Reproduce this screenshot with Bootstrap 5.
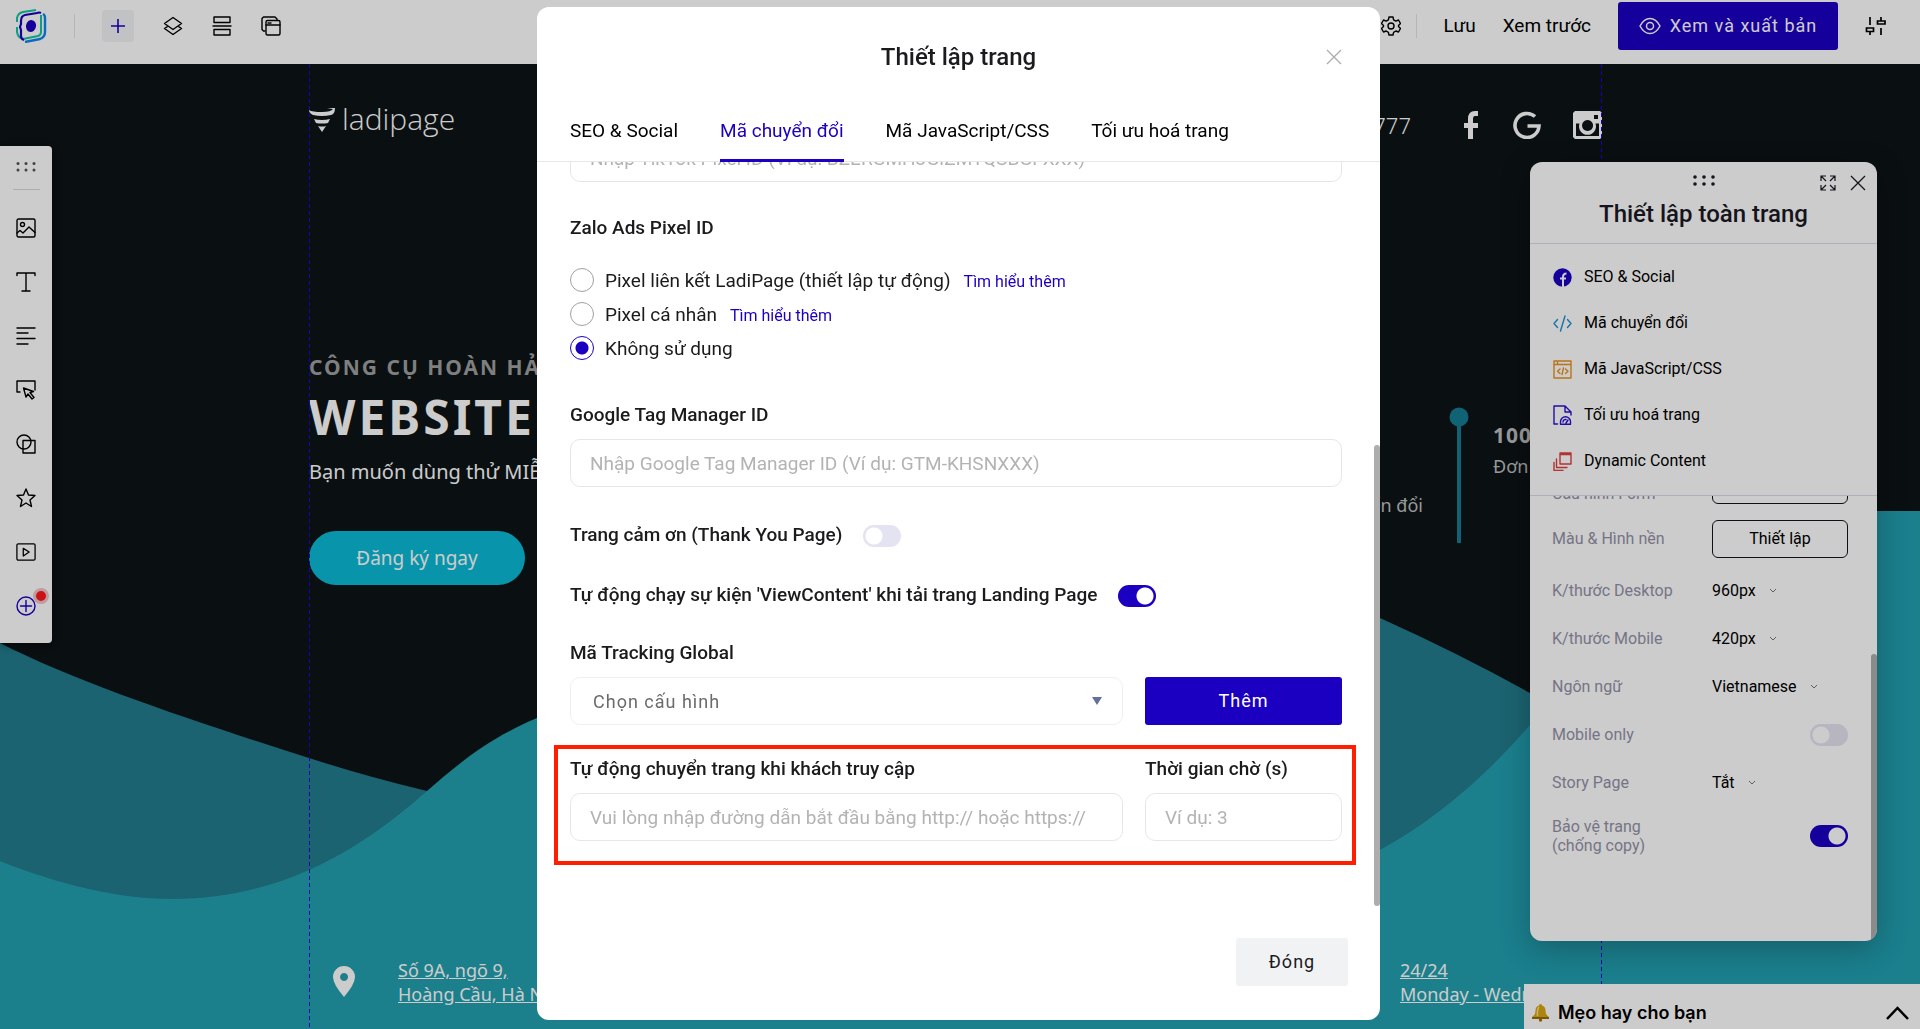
<!DOCTYPE html>
<html lang="vi">
<head>
<meta charset="utf-8">
<meta name="viewport" content="width=device-width, initial-scale=1">
<title>Thiết lập trang</title>
<link href="https://cdn.jsdelivr.net/npm/bootstrap@5.3.0/dist/css/bootstrap.min.css" rel="stylesheet">
<style>
  :root { --ink: #1b1b1d; --brand: #1c00c2; --line: #ededed; }
  body { font-family: Roboto, "Noto Sans", sans-serif; font-size: 19px; line-height: 24px; color: #000; height: 100vh; overflow: hidden; }
  svg { display: block; fill: none; flex: none; }
  .ico { stroke: currentColor; stroke-width: 1.4; stroke-linecap: round; stroke-linejoin: round; }
  .bare { border: 0; background: none; padding: 0; color: inherit; display: block; }
  .textlink { color: inherit; text-decoration: none; }

  /* editor top bar */
  .editor-bar { height: 64px; padding: 0 34px 12px 15px; }
  .bar-left, .bar-right { gap: 27px; }
  .bar-tools { gap: 29px; }
  .bar-gear { gap: 15px; }
  .rule-v { width: 1px; height: 24px; background: #e4e4e6; }
  .add-btn { width: 32px; height: 32px; border-radius: 4px; background: #f1f3f6; color: var(--brand); }
  .publish { width: 220px; height: 48px; border-radius: 3px; background: var(--brand); color: #fff; font-size: 18px; letter-spacing: 1px; gap: 9px; border: 0; }

  /* page being edited */
  .canvas { background: #0d1316; font-family: "Noto Sans", "Open Sans", sans-serif; color: #fff; }
  .waves { position: absolute; inset: 0; }
  .guides { position: relative; margin: 0 318px 0 309px; padding-bottom: 23px; }
  .guides::before, .guides::after { content: ""; position: absolute; top: 0; bottom: 0; width: 1px; background: repeating-linear-gradient(#2200e6 0 4px, transparent 4px 7px); }
  .guides::before { left: 0; }
  .guides::after { right: 0; }
  .site-top { height: 50px; margin-top: 36px; }
  .site-brand { padding-bottom: 12px; gap: 7px; }
  .site-name { font-family: "Open Sans", sans-serif; font-size: 30px; font-weight: 300; line-height: 36px; }
  .phone { font-size: 22px; font-weight: 300; }
  .socials { gap: 32px; margin-left: 50px; }
  .hero { padding-top: 201px; }
  .kicker { font-size: 21px; line-height: 32px; font-weight: 700; letter-spacing: 2px; color: #9f9f9f; }
  .headline { font-size: 48px; line-height: 60px; font-weight: 700; letter-spacing: 3px; margin: 4px 0 11px; }
  .pitch { font-size: 20px; line-height: 28px; margin-bottom: 45px; }
  .cta { width: 216px; height: 54px; border-radius: 27px; border: 0; background: #0abbd6; color: #fff; font-size: 19px; }
  .steps { padding-top: 257px; font-size: 18px; color: #bfbfbf; }
  .steps-bar { margin: 0 24px 0 26px; }
  .steps-l { padding-top: 86px; }
  .steps-r { width: 109px; padding-top: 13px; }
  .steps-num { font-size: 21px; font-weight: 700; line-height: 30px; letter-spacing: 1px; margin-bottom: 4px; }
  .pin { margin: 8px 43px 0 24px; }
  .addr { font-size: 18px; line-height: 24px; color: #fff; }
  .addr-r { width: 202px; }

  /* floating tool strip */
  .tools { position: absolute; left: 0; top: 146px; width: 52px; background: #fff; border-radius: 0 4px 4px 0; padding: 15px 0 27px; box-shadow: 0 2px 8px rgba(0,0,0,.4); }
  .tools hr { width: 27px; margin: 16px 0 28px; border-color: #d8d8d8; opacity: 1; }
  .tool-list { gap: 34px; }
  .dot-new { position: absolute; right: 3px; bottom: 39px; width: 16px; height: 16px; border-radius: 50%; border: 3px solid #f0c4c8; background: #fb1a1d; }

  /* floating settings panel */
  .side { position: absolute; top: 162px; right: 43px; bottom: 88px; width: 347px; background: #fff; border-radius: 12px; overflow: hidden; box-shadow: 0 8px 30px rgba(0,0,0,.25); font-size: 16px; line-height: 20px; }
  .side-head { height: 82px; padding-top: 13px; border-bottom: 1px solid #dedde9; }
  .side-title { font-size: 24px; line-height: 30px; font-weight: 500; color: #1a1826; margin: 13px 0 0; }
  .side-acts { position: absolute; right: 11px; top: 13px; gap: 14px; color: #1a1826; }
  .side-nav { padding: 10px 23px 11px; border-bottom: 1px solid #dedde9; }
  .side-nav a { height: 46px; gap: 12px; }
  .side-rows { padding: 0 29px 0 22px; overflow: hidden; }
  .side-rows label, .side-rows .cap { width: 160px; flex: none; color: #9392a8; }
  .first-row { margin-top: -30px; margin-bottom: 16px; }
  .bg-row { margin-bottom: 9px; }
  .set-row { height: 48px; }
  .copy-row { margin-top: 10px; line-height: 19px; }
  .outline { flex: 1; height: 38px; border: 1px solid #15131f; border-radius: 6px; background: none; color: #000; }
  .side-rows select { appearance: none; border: 0; background: none; padding: 0; color: #000; margin-right: 13px; }
  .thumb { position: absolute; right: 0; width: 6px; border-radius: 4px; }
  .side .thumb { top: 492px; bottom: 0; background: #aeaeae; }

  .sw.form-check-input { width: 38px; height: 22px; margin: 0; border: 0; background-color: #e4e3f1; background-image: radial-gradient(circle at 11px 11px, #fff 8px, transparent 9px); background-position: 0 0; background-size: 38px 22px; border-radius: 11px; flex: none; float: none; transition: none; }
  .sw.form-check-input:checked { background-color: var(--brand); background-image: radial-gradient(circle at 27px 11px, #fff 8px, transparent 9px); background-position: 0 0; }

  .tips { position: absolute; right: 0; bottom: 0; width: 396px; height: 45px; background: #fff; padding: 12px 11px 0 7px; font-family: Inter, sans-serif; font-size: 18px; font-weight: 600; }

  /* dialog */
  .dim { opacity: .2; }
  .modal.page-modal { padding-right: 3px; overflow: hidden; }
  .page-modal .modal-dialog { max-width: 843px; margin-top: 7px; margin-bottom: 0; height: calc(100vh - 16px); }
  .page-modal .modal-content { height: 100%; border: 0; border-radius: 12px; overflow: hidden; }
  .dlg-head { padding: 35px 33px 0; box-shadow: inset 0 -1px #e8e8e8; }
  .dlg-title { font-size: 24px; line-height: 30px; font-weight: 500; color: var(--ink); margin: 0 0 47px; text-align: center; }
  .dlg-close { position: absolute; right: 38px; top: 42px; color: #aaa; }
  .dlg-tabs { gap: 42px; }
  .dlg-tabs .nav-link { padding: 0 0 16px; border-bottom: 3px solid transparent; color: #000; }
  .dlg-tabs .nav-link.active { color: var(--brand); border-color: var(--brand); }
  .dlg-body { flex: 1; min-height: 0; overflow: hidden; padding: 0 38px 0 33px; color: var(--ink); }
  .thumb-dlg { top: 438px; bottom: 114px; background: #adadad; }
  .field.form-control { height: 48px; border: 1px solid #e6e6e6; border-radius: 10px; padding: 0 19px; font-size: 19px; color: var(--ink); }
  .field.form-control::placeholder { color: #b3b3b3; opacity: 1; }
  .field.form-select { height: 48px; border: 1px solid #f0f0f0; border-radius: 10px; padding: 0 22px; font-size: 18px; letter-spacing: 1px; color: #6b6b6b; background-image: url("data:image/svg+xml,%3Csvg xmlns='http://www.w3.org/2000/svg' viewBox='0 0 10 8'%3E%3Cpath d='M0 0h10L5 8z' fill='%2363709a'/%3E%3C/svg%3E"); background-size: 10px 8px; background-position: right 20px center; }
  .field.first-field { margin-top: -28px; }
  .lbl { font-weight: 500; display: block; margin-bottom: 12px; }
  .blk-a { margin-top: 34px; }
  .blk-b { margin-top: 38px; }
  .opts { margin-top: 23px; }
  .opt { height: 34px; gap: 11px; }
  .opt .form-check-input { width: 24px; height: 24px; margin: 0; border: 1px solid #a0a0a0; flex: none; }
  .opt .form-check-input:checked { background-color: #fff; border-color: var(--brand); background-image: radial-gradient(circle, var(--brand) 6px, transparent 7px); }
  .opt-text { padding-top: 2px; }
  .opt a { font-size: 16px; color: var(--brand); text-decoration: none; margin-left: 13px; }
  .sw-row { gap: 21px; margin-top: 36px; }
  .sw-row .lbl { margin: 0; }
  .pair { gap: 22px; }
  .pair-r { width: 197px; flex: none; }
  .solid { height: 48px; border: 0; border-radius: 3px; background: var(--brand); color: #fff; font-size: 18px; letter-spacing: 1px; }
  .marked { margin: 20px -14px 0 -16px; padding: 8px 10px 20px 12px; border: 4px solid #ff1f00; }
  .dlg-foot { padding: 32px 32px 34px; }
  .shut { width: 112px; height: 48px; border: 0; border-radius: 3px; background: #f1f2f4; color: var(--ink); font-size: 18px; letter-spacing: 1px; }
</style>
</head>
<body class="d-flex flex-column position-relative">

<header class="editor-bar d-flex align-items-center justify-content-between bg-white">
  <div class="bar-left d-flex align-items-center">
    <a href="#" aria-label="LadiPage"><svg width="32" height="34" viewBox="0 0 32 34">
      <path d="M2 13V9q1-5 6-6l13-2M2 18v5q1 5 4 6M8 30l15-3q3-1 3-4V6" stroke="#12c7a4" stroke-width="2"/>
      <path d="M28 5q2 1 2 4v14q0 5-5 7l-15 3" stroke="#0a86f0" stroke-width="2.4"/>
      <path d="M26 4q-2-1-4 0L10 6q-4 1-4 6v3l-1 3 1 3v6q0 3 3 4" stroke="#1c00c2" stroke-width="2.2"/>
      <ellipse cx="16" cy="17" rx="5" ry="6" fill="#1c00c2" transform="rotate(12 16 17)"/></svg></a>
    <span class="rule-v"></span>
    <div class="bar-tools d-flex align-items-center">
      <button class="bare add-btn d-flex align-items-center justify-content-center" aria-label="Thêm"><svg width="14" height="14" viewBox="0 0 14 14" stroke="currentColor" stroke-width="1.6"><path d="M7 0v14M0 7h14"/></svg></button>
      <button class="bare" aria-label="Lớp"><svg class="ico" width="20" height="20" viewBox="0 0 20 20"><path d="M10 1.500 1.500 7.500 10 13.500 18.500 7.500zM4 10.800 1.500 12.500l8.500 6 8.500-6L16 10.800"/></svg></button>
      <button class="bare" aria-label="Section"><svg class="ico" width="20" height="20" viewBox="0 0 20 20"><path d="M2 1h16v5.500H2zM1 10h18M2 13.500h16V19H2z"/></svg></button>
      <button class="bare" aria-label="Popup"><svg class="ico" width="20" height="20" viewBox="0 0 20 20"><path d="M4 15H2.500L1 13.500v-11L2.500 1H14l2 2v1.500"/><rect x="5" y="4.500" width="14" height="14.500" rx="1.500"/><path d="M5 9h14M7 7h1M9 7h1"/></svg></button>
    </div>
  </div>
  <div class="bar-right d-flex align-items-center">
    <div class="bar-gear d-flex align-items-center">
      <button class="bare" aria-label="Cài đặt"><svg class="ico" width="20" height="20" viewBox="0 0 20 20"><path d="M8 1h4l.6 2.800 2.200 1.300L17.500 4l2 3.500-2 2v1l2 2-2 3.500-2.700-1-2.200 1.300L12 19H8l-.6-2.700L5.200 15l-2.700 1-2-3.500 2-2v-1l-2-2L2.500 4l2.700 1.100 2.200-1.300z"/><circle cx="10" cy="10" r="3"/></svg></button>
      <span class="rule-v"></span>
    </div>
    <a href="#" class="textlink">Lưu</a>
    <a href="#" class="textlink">Xem trước</a>
    <button class="publish d-flex align-items-center justify-content-center"><svg width="22" height="18" viewBox="0 0 22 18" stroke="currentColor" stroke-width="1.500"><path d="M1 9q4-7.500 10-7.500T21 9q-4 7.500-10 7.500T1 9z"/><circle cx="11" cy="9" r="3.500"/></svg>Xem và xuất bản</button>
    <button class="bare" aria-label="Tuỳ chỉnh"><svg width="21" height="20" viewBox="0 0 21 20" stroke="currentColor" stroke-width="1.700"><path d="M5 1v8M1.500 12h7v3.500h-7zM5 15.500V19M16 1v3.500M12.500 5h7.500v3h-7.500zM16 12v7"/></svg></button>
  </div>
</header>

<main class="canvas position-relative flex-grow-1">
  <svg class="waves w-100 h-100" viewBox="0 64 1920 965" preserveAspectRatio="none">
    <path d="M0 643C80 684 200 723 309 758Q368 777 427 791C700 850 900 420 1380 618Q1460 654 1530 693Q1700 800 1760 1029H0z" fill="#227c8c"/>
    <path d="M0 861C60 885 120 899 171 899C290 899 370 841 427 791C460 762 490 738 537 718C800 620 950 1070 1380 850Q1460 806 1530 725C1640 600 1740 510 1877 511L1920 511V1029H0z" fill="#229fb0"/>
  </svg>

  <div class="guides h-100 d-flex flex-column">
    <div class="site-top d-flex align-items-center">
      <div class="site-brand d-flex align-items-center">
        <svg width="26" height="25" viewBox="0 0 26 25"><path fill="#fff" d="M0 3q3 2 13 2 9 0 11-3L18 1l8 0q0 6-4 7-9 2-18 0Q0 6 0 3zM5 12q8 2 16 0l-2 4q-6 1-12 0zM9 19q4 1 8 0l-4 6z"/></svg>
        <span class="site-name">ladipage</span>
      </div>
      <span class="phone ms-auto">777</span>
      <div class="socials d-flex align-items-center">
        <svg width="20" height="28" viewBox="0 0 20 28"><path fill="#fff" d="M7 28V17H3v-5h4V8q0-8 7-8h3v5h-3q-2 0-2 3v4h5v5h-5v11z"/></svg>
        <svg width="28" height="28" viewBox="0 0 28 28"><path d="M22 5.500A12 12 0 1 0 26 15H14.500" stroke="#fff" stroke-width="3.600"/></svg>
        <svg width="29" height="28" viewBox="0 0 29 28"><path fill="#fff" fill-rule="evenodd" d="M2 0h25l2 2v24l-2 2H2l-2-2V2zM21 4v4h4V4zM3 12.500V25h23V12.500h-3.500a8.500 8.500 0 1 1-16 0zM14.500 9a5.500 5.500 0 1 0 .1 0z"/></svg>
      </div>
    </div>

    <div class="d-flex justify-content-between">
      <div class="hero text-nowrap">
        <div class="kicker">CÔNG CỤ HOÀN HẢO</div>
        <h1 class="headline">WEBSITE</h1>
        <p class="pitch">Bạn muốn dùng thử MIỄN</p>
        <button class="cta">Đăng ký ngay</button>
      </div>
      <div class="steps d-flex text-nowrap">
        <div class="steps-l">chuyển đổi</div>
        <svg class="steps-bar" width="20" height="136" viewBox="0 0 20 136"><path d="M10 10v126" stroke="#157c91" stroke-width="4"/><circle cx="10" cy="10" r="9.500" fill="#157c91"/></svg>
        <div class="steps-r"><div class="steps-num">100</div>Đơn</div>
      </div>
    </div>

    <div class="d-flex mt-auto align-items-start text-nowrap">
      <svg class="pin" width="22" height="31" viewBox="0 0 22 31"><path fill="#fff" fill-rule="evenodd" d="M11 0a11 11 0 0 1 11 11q0 7-11 20Q0 18 0 11A11 11 0 0 1 11 0zm0 7a4 4 0 1 0 .1 0z"/></svg>
      <a href="#" class="addr">Số 9A, ngõ 9,<br>Hoàng Cầu, Hà Nội</a>
      <a href="#" class="addr addr-r ms-auto">24/24<br>Monday - Wednes</a>
    </div>
  </div>
</main>

<nav class="tools" aria-label="Công cụ">
  <div class="d-flex flex-column align-items-center">
    <svg width="20" height="12" viewBox="0 0 20 12"><g fill="#555"><circle cx="2" cy="2.500" r="1.500"/><circle cx="10" cy="2.500" r="1.500"/><circle cx="18" cy="2.500" r="1.500"/><circle cx="2" cy="9" r="1.500"/><circle cx="10" cy="9" r="1.500"/><circle cx="18" cy="9" r="1.500"/></g></svg>
    <hr>
    <div class="tool-list d-flex flex-column">
      <button class="bare" aria-label="Ảnh"><svg class="ico" width="20" height="20" viewBox="0 0 20 20"><rect x="1" y="1" width="18" height="18" rx="1.500"/><circle cx="6.500" cy="6.500" r="2"/><path d="M1 15l3-2.500L7 15l6-6 6 5.500"/></svg></button>
      <button class="bare" aria-label="Văn bản"><svg class="ico" width="20" height="20" viewBox="0 0 20 20"><path d="M1 3.500V1h18v2.500M10 1v18M6 19h8"/></svg></button>
      <button class="bare" aria-label="Đoạn văn"><svg class="ico" width="20" height="20" viewBox="0 0 20 20"><path d="M1 2h18M1 7h11M1 12.500h18M1 18h11"/></svg></button>
      <button class="bare" aria-label="Nút"><svg class="ico" width="20" height="20" viewBox="0 0 20 20"><path d="M4 12H1V1h18v9M7.500 8l2.500 9 2-3 4 5 2-1.500-4-5 3.500-1z"/></svg></button>
      <button class="bare" aria-label="Hình khối"><svg class="ico" width="20" height="20" viewBox="0 0 20 20"><circle cx="8" cy="8" r="7"/><path d="M7 6.500h12V19H7z"/></svg></button>
      <button class="bare" aria-label="Biểu tượng"><svg class="ico" width="20" height="20" viewBox="0 0 20 20"><path d="M10 1l2.500 6 6.500.5-5 4.500 1.500 6.500L10 15l-5.500 3.500L6 12 1 7.500 7.500 7z"/></svg></button>
      <button class="bare" aria-label="Video"><svg class="ico" width="20" height="20" viewBox="-1 0 22 20"><rect x="0" y="1" width="20" height="18" rx="1.500"/><path d="M7 6v8.500l6.500-4.500z"/></svg></button>
      <button class="bare" aria-label="Thêm"><svg class="ico" width="20" height="20" viewBox="0 0 20 20" color="#1c00c2"><circle cx="10" cy="10" r="9"/><path d="M10 4.500v11M4.500 10h11"/></svg></button>
    </div>
  </div>
  <span class="dot-new"></span>
</nav>

<aside class="side d-flex flex-column">
  <div class="side-head d-flex flex-column align-items-center flex-shrink-0">
    <svg width="22" height="11" viewBox="0 0 22 11"><g fill="#1a1826"><circle cx="2" cy="2" r="1.800"/><circle cx="11" cy="2" r="1.800"/><circle cx="20" cy="2" r="1.800"/><circle cx="2" cy="9" r="1.800"/><circle cx="11" cy="9" r="1.800"/><circle cx="20" cy="9" r="1.800"/></g></svg>
    <h2 class="side-title">Thiết lập toàn trang</h2>
    <div class="side-acts d-flex">
      <button class="bare" aria-label="Mở rộng"><svg width="16" height="16" viewBox="0 0 16 16" stroke="currentColor" stroke-width="1.200"><path d="M1 6V1h5M10 1h5v5M15 10v5h-5M6 15H1v-5M1 1l5 5M15 1l-5 5M15 15l-5-5M1 15l5-5"/></svg></button>
      <button class="bare" aria-label="Đóng bảng"><svg width="16" height="16" viewBox="0 0 16 16" stroke="currentColor" stroke-width="1.300"><path d="M1 1l14 14M15 1 1 15"/></svg></button>
    </div>
  </div>
  <nav class="side-nav flex-shrink-0">
    <a href="#" class="textlink d-flex align-items-center"><svg width="19" height="19" viewBox="0 0 19 19"><circle cx="9.500" cy="9.500" r="9.200" fill="#1c00c2"/><path d="M10 19V9q0-3.500 3.500-3.500M7 10.500h6" stroke="#fff" stroke-width="2"/></svg>SEO &amp; Social</a>
    <a href="#" class="textlink d-flex align-items-center"><svg class="ico" width="19" height="19" viewBox="0 0 19 19" color="#1a8fd8"><path d="M4.500 5.500 1 9.500l3.500 4M14.500 5.500l3.500 4-3.500 4M12 2 7.500 17"/></svg>Mã chuyển đổi</a>
    <a href="#" class="textlink d-flex align-items-center"><svg class="ico" width="19" height="19" viewBox="0 0 19 19" color="#e8921f"><path d="M1 1h17v17H1zM1 4.500h17M4.500 1v3M7 9l-2.500 2.200L7 13.500M12.500 9l2.500 2.200-2.500 2.300M10.500 8 9 14.500"/></svg>Mã JavaScript/CSS</a>
    <a href="#" class="textlink d-flex align-items-center"><svg class="ico" width="19" height="20" viewBox="0 0 19 20" color="#2a10d0"><path d="M4.500 19H1V1h11l6 6v3M12 1v6h6M7.500 19.200v-2.500a5 5 0 0 1 10 0v2.500zM10 17a2.500 2.500 0 0 1 3-2.500M13 18l2-3"/></svg>Tối ưu hoá trang</a>
    <a href="#" class="textlink d-flex align-items-center"><svg class="ico" width="19" height="19" viewBox="0 0 19 19" color="#e0403f"><path d="M7 1h11v11H7zM7 2.500h11M3.500 7v8.500H14M1 10.500V18.500h9"/></svg>Dynamic Content</a>
  </nav>
  <div class="side-rows flex-grow-1">
    <div class="first-row d-flex align-items-end"><span class="cap">Cấu hình Form</span><button class="outline">Thiết lập</button></div>
    <div class="bg-row d-flex align-items-center"><span class="cap">Màu &amp; Hình nền</span><button class="outline">Thiết lập</button></div>
    <div class="set-row d-flex align-items-center"><label for="dw">K/thước Desktop</label><select id="dw"><option>960px</option></select><svg width="8" height="6" viewBox="0 0 8 6" stroke="#777"><path d="M1 1l3 3 3-3"/></svg></div>
    <div class="set-row d-flex align-items-center"><label for="mw">K/thước Mobile</label><select id="mw"><option>420px</option></select><svg width="8" height="6" viewBox="0 0 8 6" stroke="#777"><path d="M1 1l3 3 3-3"/></svg></div>
    <div class="set-row d-flex align-items-center"><label for="lg">Ngôn ngữ</label><select id="lg"><option>Vietnamese</option></select><svg width="8" height="6" viewBox="0 0 8 6" stroke="#777"><path d="M1 1l3 3 3-3"/></svg></div>
    <div class="set-row d-flex align-items-center justify-content-between"><label for="mo">Mobile only</label><input id="mo" type="checkbox" class="form-check-input sw"></div>
    <div class="set-row d-flex align-items-center"><label for="sp">Story Page</label><select id="sp"><option>Tắt</option></select><svg width="8" height="6" viewBox="0 0 8 6" stroke="#777"><path d="M1 1l3 3 3-3"/></svg></div>
    <div class="copy-row d-flex align-items-center justify-content-between"><label for="pc">Bảo vệ trang<br>(chống copy)</label><input id="pc" type="checkbox" class="form-check-input sw" checked></div>
  </div>
  <span class="thumb"></span>
</aside>

<section class="tips d-flex align-items-center">
  <svg width="19" height="19" viewBox="0 0 19 19" class="me-2"><path d="M9.500 1q1.500 0 1.500 1.500 3.500 1 3.500 5 0 4.500 3.500 6.500v2H1v-2q3.500-2 3.500-6.500 0-4 3.500-5Q8 1 9.500 1z" fill="#d9a514"/><path d="M8 4q-2 2-1.500 9" stroke="#fbe07a" stroke-width="1.500"/><path d="M1 15h17" stroke="#8a5a0a" stroke-width="1.500"/><circle cx="9.500" cy="17" r="1.700" fill="#a4700c"/></svg>
  <span>Mẹo hay cho bạn</span>
  <button class="bare ms-auto" aria-label="Mở"><svg width="23" height="14" viewBox="0 0 23 14" stroke="#000" stroke-width="2.500"><path d="M1 13 11.500 2 22 13"/></svg></button>
</section>

<div class="modal-backdrop dim"></div>

<div class="modal page-modal d-block" tabindex="-1" role="dialog" aria-labelledby="dlgTitle">
  <div class="modal-dialog">
    <div class="modal-content">
      <div class="dlg-head">
        <h2 class="dlg-title" id="dlgTitle">Thiết lập trang</h2>
        <button class="bare dlg-close" aria-label="Đóng hộp thoại"><svg width="16" height="16" viewBox="0 0 16 16" stroke="currentColor" stroke-width="1.200"><path d="M1 1l14 14M15 1 1 15"/></svg></button>
        <nav class="nav dlg-tabs">
          <a class="nav-link" href="#">SEO &amp; Social</a>
          <a class="nav-link active" href="#">Mã chuyển đổi</a>
          <a class="nav-link" href="#">Mã JavaScript/CSS</a>
          <a class="nav-link" href="#">Tối ưu hoá trang</a>
        </nav>
      </div>
      <div class="dlg-body">
        <input class="form-control field first-field" type="text" aria-label="TikTok Pixel ID" placeholder="Nhập TikTok Pixel ID (Ví dụ: BZERGMHJGIZMTQSBGFXXX)">

        <div class="lbl blk-a mb-0">Zalo Ads Pixel ID</div>
        <div class="opts">
          <div class="opt d-flex align-items-center"><input class="form-check-input" type="radio" name="zalo" id="z1"><div class="opt-text"><label for="z1">Pixel liên kết LadiPage (thiết lập tự động)</label><a href="#">Tìm hiểu thêm</a></div></div>
          <div class="opt d-flex align-items-center"><input class="form-check-input" type="radio" name="zalo" id="z2"><div class="opt-text"><label for="z2">Pixel cá nhân</label><a href="#">Tìm hiểu thêm</a></div></div>
          <div class="opt d-flex align-items-center"><input class="form-check-input" type="radio" name="zalo" id="z3" checked><div class="opt-text"><label for="z3">Không sử dụng</label></div></div>
        </div>

        <label class="lbl blk-b" for="gtm">Google Tag Manager ID</label>
        <input class="form-control field" type="text" id="gtm" placeholder="Nhập Google Tag Manager ID (Ví dụ: GTM-KHSNXXX)">

        <div class="sw-row d-flex align-items-end"><label class="lbl" for="ty">Trang cảm ơn (Thank You Page)</label><input id="ty" type="checkbox" class="form-check-input sw"></div>
        <div class="sw-row d-flex align-items-end"><label class="lbl" for="vc">Tự động chạy sự kiện 'ViewContent' khi tải trang Landing Page</label><input id="vc" type="checkbox" class="form-check-input sw" checked></div>

        <label class="lbl blk-a" for="tg">Mã Tracking Global</label>
        <div class="pair d-flex">
          <select class="form-select field" id="tg"><option>Chọn cấu hình</option></select>
          <button class="solid pair-r">Thêm</button>
        </div>

        <div class="marked">
          <div class="pair d-flex">
            <div class="flex-grow-1"><label class="lbl" for="ru">Tự động chuyển trang khi khách truy cập</label><input class="form-control field" type="text" id="ru" placeholder="Vui lòng nhập đường dẫn bắt đầu bằng http:// hoặc https://"></div>
            <div class="pair-r"><label class="lbl" for="rt">Thời gian chờ (s)</label><input class="form-control field" type="text" id="rt" placeholder="Ví dụ: 3"></div>
          </div>
        </div>
      </div>
      <div class="dlg-foot d-flex justify-content-end"><button class="shut">Đóng</button></div>
      <span class="thumb thumb-dlg"></span>
    </div>
  </div>
</div>

<script src="https://cdn.jsdelivr.net/npm/bootstrap@5.3.0/dist/js/bootstrap.bundle.min.js"></script>
</body>
</html>
